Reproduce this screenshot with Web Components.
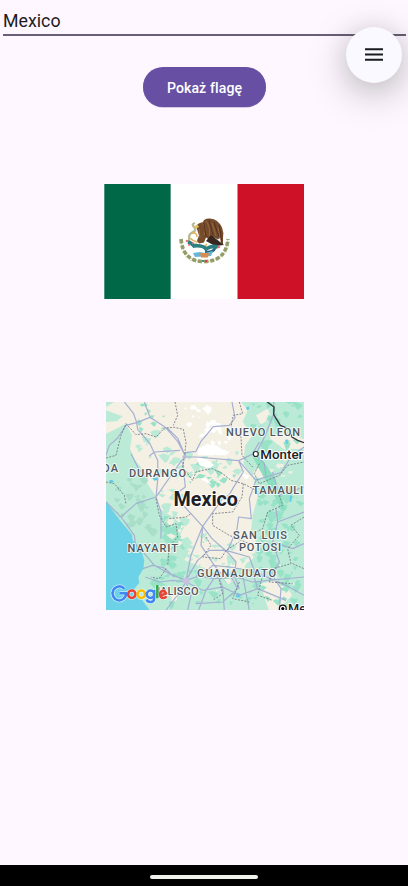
<!DOCTYPE html>
<html lang="pl"><head><meta charset="utf-8"><title>Flagi</title>
<style>html,body{margin:0;height:100%;overflow:hidden}body{background:#fef7ff}</style></head>
<body><flag-app></flag-app>
<script>
const define=(name,html,init)=>customElements.define(name,class extends HTMLElement{
  constructor(){super();this.attachShadow({mode:'open'}).innerHTML=html;if(init)init(this.shadowRoot);}
});

define('country-field',`<style>:host{display:block;margin:0 2px 0 3px;height:36px;box-sizing:border-box;border-bottom:2px solid #686175;font:17.8px/21px Roboto,sans-serif;color:#1d1b20;padding-top:10px}</style><slot></slot>`);

define('filled-button',`<style>:host{display:block}button{display:block;width:123px;height:40px;border:0;border-radius:20px;background:#6750a4;color:#fff;font:500 14.1px/20px Roboto,sans-serif;padding:1px 0 0;letter-spacing:.1px;box-shadow:0 .5px 0 #a99bcc}</style><button><slot></slot></button>`);

define('menu-fab',`<style>:host{display:grid;place-items:center;width:56px;height:56px;border-radius:50%;background:#f9f9ff;box-shadow:0 10px 38px rgba(0,0,0,.26),0 0 24px rgba(0,0,0,.07)}svg{display:block;margin-top:-1px}</style>
<svg width="18" height="13" viewBox="0 0 18 13"><path d="M0 1.300h18M0 6.500h18M0 11.700h18" stroke="#1a1b21" stroke-width="2"/></svg>`);

define('mexico-flag',`<style>:host{display:block;width:200px;height:115px}svg{display:block}</style>
<svg width="200" height="115" viewBox="104 184 200 115">
<path fill="#006847" d="M104.300 184h66.500v115h-66.500z"/><path fill="#fff" d="M170.800 184h66.700v115h-66.700z"/><path fill="#ce1126" d="M237.500 184H304v115h-66.500z"/>
<g fill="none">
<path d="M181 239Q183 261.500 204 261.500Q226 261.500 228 239" stroke="#cfd2b4" stroke-width="1"/>
<path d="M181 239Q183 261.500 204 261.500Q226 261.500 228 239" stroke="#929c68" stroke-width="3.600" stroke-dasharray="4.200 1.800"/>
<path d="M179.500 241Q182 264 204 263Q227 263 229.500 241" stroke="#d9c778" stroke-width=".8" stroke-dasharray="1.200 4.400"/>
<path d="M195 223q-4 1-1 4t-1 5-4 5 1 6 7 1" stroke="#b4ba98" stroke-width="2.200"/>
<path d="M192 233q5-1 5 4M190 238q3 3 7 4l5-2M207 244l-3 3 8 1" stroke="#dfb45a" stroke-width="1.600"/>
</g>
<path fill="#754b2c" d="M196 226q2-3 7-4 1-4 7-3.500 8 .5 12 9 2 5 1 10v7l-2-1-1-6-2 2-4-2-2 4-6-4-2 5-5 1-2-3 2-5z"/>
<path fill="none" stroke="#a87344" stroke-width=".7" d="M202 223q5 5 2 12M206 221q5 7 3 15M212 223l4 13M218 227l2 12M199 229l1 9"/>
<path fill="none" stroke="#4c3021" stroke-width=".9" d="M204 223l2 14M209 220l4 15M214 222l5 15M219 225l3 17"/>
<path fill="#38271f" d="M211 235l13 10-9 1-9-5z"/><path fill="#e8bf5e" d="M194 226l4-1 1 2-4 2z"/>
<path d="M188 242q4 1 6 4 9-1 12 3 6-4 12-2" fill="none" stroke="#2b7f81" stroke-width="3.600"/>
<path d="M205 252q8 1 10-4" fill="none" stroke="#24687a" stroke-width="2.800"/>
<g fill="#e97682"><circle cx="187" cy="241" r="1.300"/><circle cx="219" cy="247" r="1.300"/><circle cx="189" cy="245" r="1.100"/><circle cx="193" cy="243" r="1"/></g>
<path fill="#65b7da" d="M193 253l7-1 5 1 8-2-2 5-16 1z"/><path fill="#d98c50" d="M200 253h9l-1 4.500h-7z"/><path stroke="#429676" stroke-width="2" d="M202 261h2"/><path stroke="#d8385d" stroke-width="2" d="M205 261h2"/>
</svg>`);

define('map-view',`<style>:host{display:block;width:198px;height:208px}svg{display:block}text{font-family:Roboto,sans-serif;paint-order:stroke;stroke-linejoin:round}#logo path,#logo circle{stroke-width:2.500}#halo path,#halo circle{stroke:#fff;stroke-width:4;stroke-opacity:.6}</style>
<svg width="198" height="208" viewBox="0 0 594 624">
<path fill="#f5f0e4" d="M0 0h594v624H0z"/>
<path fill="#bbebd7" d="M0 95L30 80 60 65 78 100 72 140 88 175 112 205 125 245 150 285 160 320 200 345 235 375 215 415 245 405 265 430 250 480 300 500 350 512 400 500 440 470 455 430 435 390 440 340 455 285 440 225 412 185 418 130 440 100 410 60 425 25 405 0H594V624H0zM0 25l50 18-18 15L0 60zM0 0h25L0 15z"/>
<path fill="#f5f0e4" d="M490 108l50-18 54 22v28l-60 2zM445 205l20-12 30 10-30 25-25-4zM463 545l40-8 40 18 15 25-40 44h-30zM195 575l18-5v25l-15 5zM450 40l35-20 10 25-30 25zM385 460l40 5-10 35-30-10z"/>
<g id="blobs"></g>
<path fill="#6bd2e8" d="M0 298L38 350 78 398 80 415 103 438 115 475 112 500 97 525 100 542 85 560 102 585 130 624H0z"/>
<path fill="#8adfc1" d="M440 165l30 10 28 40 25 60 16 45-10 8-25-48-34-60z"/>
<g id="snow" fill="#fff"></g>
<g fill="#61c9e8"><path d="M420 17l8-4 2 8-6 4zM552 280l6 3-2 16h-5zM8 236l10-3 6 6-9 5zM538 115l7-3v14h-4zM392 572l15 5-8 10-10-2zM140 228l12-2 2 8-9 2z"/></g>
<g id="roads" fill="none" stroke="#a5b0d2" stroke-width="3.600" stroke-linejoin="round">
<path d="M55 0L83 35 92 62 132 46 115 0M132 46L178 76 215 118 238 163 218 188 150 285 90 305 45 345M0 160L10 130 35 108 60 70 92 62 95 82 132 125 155 175 156 225 150 285 165 330V410M75 155L100 205 118 215M130 162L145 150 222 145M238 163L216 110 184 78M238 152L270 148 285 118 322 74 370 70 387 48 378 0M238 152V165H270L398 176 438 157 450 155 478 100 503 35V0M440 155L460 120M398 176L412 210 380 260 370 278 348 292 290 373 230 308 210 275 238 255 230 180M398 176L450 235 430 290 436 350 398 345 393 382 363 450 318 410 290 373 255 460 240 535M0 300L45 345 85 400 88 425 120 460 145 490 190 515 240 535 285 520 320 490 370 495 430 505 470 520 540 550 594 580M290 373L285 430 308 465 325 490 345 515M360 445L310 445 275 475 240 535M360 445L430 465 450 520M360 445L390 480 385 520 400 560M110 500L140 490 175 498 205 525M118 525L160 540 200 535 240 540M240 540L210 585 180 624M240 540L255 580 245 624M240 540L290 565 350 555 400 580 455 560 540 595M270 520L325 530 390 525 440 540 594 525M278 624L300 565 330 520M350 555L355 624M350 555L335 520M370 515L395 560 350 600 270 605M410 520L430 624M455 560L440 510M510 320L515 360 500 420 520 480 500 520 525 560 520 624M500 420L560 440 594 425M515 360L594 330M594 135L555 165 525 212 480 225 450 235M500 210L520 280 594 255M480 225L475 185 450 160"/></g>
<g fill="none" stroke="#6f7480" stroke-width="2.500" stroke-dasharray="6 4">
<path d="M60 65L90 98 120 95 150 105 160 95 175 78 205 76 232 82 240 122 236 160 230 195 260 235 270 210 300 203 320 200 350 215 375 235 412 245 450 265 460 285M207 0L215 40 202 70M0 168L30 160 45 100 60 65M0 240L25 245 55 280 60 305M150 290L160 340 180 375 210 365 215 405 190 430 185 490M190 350L240 345 255 335M412 245L408 285 380 330 320 335 320 370 370 400 430 425M300 405L315 430 290 465 345 470 360 445 400 420M360 510L340 535 350 575 320 595M400 0L410 35 382 40 375 75 405 105 408 160 440 195M460 185L445 215 460 245 520 220 545 190 594 180M520 280L530 310 485 330 470 380 440 395M594 345L555 370 580 400 545 440 555 485 500 500 490 540 560 545M560 485L594 500M470 520L455 580 500 595M400 540L380 590 430 600M180 500L160 530 135 525"/></g>
<path fill="none" stroke="#35363d" stroke-width="4.200" d="M484 0L504 15 503 38 523 70 548 80 558 105 575 115 594 122"/>
<circle cx="235" cy="165" r="6" fill="#b7b9d8"/><circle cx="241" cy="537" r="10" fill="#c9bfe0"/><circle cx="465" cy="520" r="6" fill="#cbbce0"/>
<g transform="translate(-318 -1206) scale(3)">
<g fill="#50565f" stroke="#f8fbf7" stroke-opacity=".9" stroke-width="2" font-size="11" font-weight="500">
<text x="226" y="436" textLength="74">NUEVO LEON</text><text x="102.500" y="471.500" textLength="15.500">DA</text><text x="129" y="477" textLength="57">DURANGO</text><text x="252.500" y="494.300" textLength="50.500">TAMAULI</text><text x="233" y="538.700" textLength="54">SAN LUIS</text><text x="239" y="551.200" textLength="42">POTOSI</text><text x="127.500" y="551.700" textLength="50.500">NAYARIT</text><text x="197" y="577" textLength="79">GUANAJUATO</text><text x="154" y="595.300" textLength="44.500">JALISCO</text></g>
<g fill="#202124" stroke="#fff" stroke-width="2"><text x="260.300" y="459.300" font-size="13.500" font-weight="500" textLength="43" lengthAdjust="spacingAndGlyphs">Monter</text><text x="173.500" y="505.500" font-size="20" font-weight="700" textLength="64.500" lengthAdjust="spacingAndGlyphs">Mexico</text><text x="288" y="613" font-size="13" font-weight="500" textLength="18" lengthAdjust="spacingAndGlyphs">Me</text></g>
<circle cx="255.800" cy="454" r="2.500" fill="#fff" stroke="#27292e" stroke-width="1.200"/><circle cx="282.800" cy="608.500" r="3.400" fill="#fff" stroke="#111" stroke-width="1.200"/><circle cx="282.800" cy="608.500" r="1.600"/>
<g fill="none" id="halo"></g><g fill="none" id="logo"><path stroke="#4285f4" d="M124.300 588.700A6.700 7 0 1 0 126 593.200H119.500"/><circle stroke="#ea4335" cx="131.800" cy="594.300" r="3.700"/><circle stroke="#fbbc04" cx="141.300" cy="594.300" r="3.700"/><path stroke="#4285f4" d="M154.200 590V598.500Q154 602 150.300 602 147.600 602 146.600 599.500M154.200 594.300A3.700 3.700 0 1 1 146.800 594.300 3.700 3.700 0 1 1 154.200 594.300"/><path stroke="#34a853" d="M157.300 585v13.200"/><path stroke="#ea4335" d="M160.300 595.800L166 593.300Q164.900 590.700 163 590.700 160.100 591 160.100 594.500 160.300 598 163.300 598 165.300 598 166.500 596.300"/></g></g>
</svg>`,root=>{
  // Repeatable scatter of vegetation and bare-rock patches.
  let seed=41;const r=()=>(seed=(seed*16807)%2147483647)/2147483647;
  const patch=(x,y,s)=>`M${x} ${y}l${s*r()} ${-s*r()} ${s} ${s*.6*r()} ${-s*.3} ${s*r()} ${-s*.5} ${s*.4}z`;
  const scatter=(n,x,y,w,h,s)=>{let d='';for(let i=0;i<n;i++)d+=patch(x+r()*w,y+r()*h,4+r()*s);return d;};
  root.querySelector('#blobs').innerHTML=
    `<path fill="#98e2c8" d="${scatter(60,130,500,450,110,15)+scatter(70,450,260,120,250,17)+scatter(30,430,0,145,160,16)+scatter(35,160,340,60,150,17)+scatter(14,85,0,90,90,10)+scatter(16,240,150,150,100,13)}"/>
     <path fill="#a9dec8" d="${scatter(35,20,230,110,150,16)}"/>
     <path fill="#bbebd7" d="${scatter(20,85,90,130,150,16)+scatter(22,230,130,180,100,15)+scatter(28,220,400,220,100,15)+scatter(12,150,260,70,90,15)}"/>
     <path fill="#f3f0e3" d="${scatter(26,170,360,270,120,13)+scatter(12,430,170,130,80,10)+scatter(12,200,480,360,100,9)}"/>`;
  root.querySelector('#snow').innerHTML=`<path d="M275 140L305 125 345 140 370 150 360 160 275 160zM272 165L300 170 325 190 310 198 280 190zM325 60L343 72 350 100 340 95zM282 230L300 228 318 250z${scatter(18,225,20,110,130,16)+scatter(5,300,100,70,60,16)+scatter(4,260,0,30,30,12)+scatter(3,360,210,50,20,10)}"/>`;
  root.querySelector('#halo').innerHTML=root.querySelector('#logo').innerHTML;
});

define('nav-bar',`<style>:host{display:flex;flex:none;height:21px;background:#000;justify-content:center;align-items:center}i{display:block;width:108px;height:4px;border-radius:2px;background:#eff1ed;margin-top:3px}</style><i></i>`);

define('flag-app',`<style>:host{display:flex;flex-direction:column;height:100vh;max-height:886px;position:relative;background:#fef7ff;overflow:hidden}
main{display:flex;flex-direction:column;flex:1;min-height:0}filled-button{align-self:center;margin-top:31px;margin-left:1px}mexico-flag{align-self:center;margin-top:77px}map-view{align-self:center;margin-top:103px;margin-left:2px}menu-fab{position:absolute;left:346px;top:26.500px}</style>
<main><country-field>Mexico</country-field><filled-button>Pokaż flagę</filled-button><mexico-flag></mexico-flag><map-view></map-view></main><nav-bar></nav-bar><menu-fab></menu-fab>`);
</script></body></html>
